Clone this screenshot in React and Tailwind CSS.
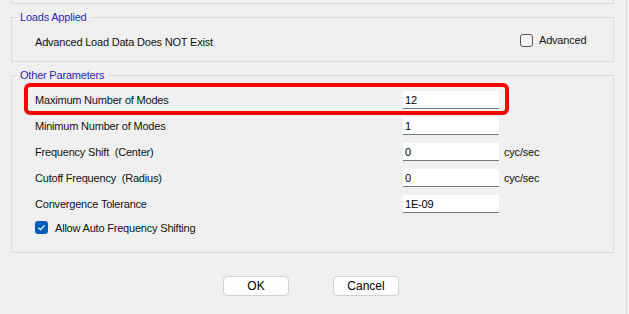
export default function App() {
  const rows = [
    { label: "Maximum Number of Modes", value: "12" },
    { label: "Minimum Number of Modes", value: "1" },
    { label: "Frequency Shift  (Center)", value: "0", unit: "cyc/sec" },
    { label: "Cutoff Frequency  (Radius)", value: "0", unit: "cyc/sec" },
    { label: "Convergence Tolerance", value: "1E-09" },
  ];

  return (
    <div className="w-[629px] h-[314px] bg-[#f0f0f0] flex overflow-hidden text-[11px] tracking-[-0.2px] text-[#111] font-['Liberation_Sans',Arial,sans-serif]">
      <div className="w-[626px] flex flex-col">
        {/* bottom of the group above */}
        <div className="h-[4px] ml-[11px] mr-[12px] border-x border-b border-[#dcdcdc]" />

        <fieldset className="mt-[5px] ml-[11px] mr-[12px] border border-[#dcdcdc] min-w-0">
          <legend className="ml-[5px] px-[3px] h-4 leading-4 text-[#2b2bb8]">Loads Applied</legend>
          <div className="pt-[9px] pb-[11px] pl-[23px] flex items-center h-[36px]">
            <span className="flex-1 leading-4">Advanced Load Data Does NOT Exist</span>
            <label className="w-[93px] flex items-center gap-[6px] -mt-[4px]">
              <span className="w-[13px] h-[13px] rounded-[3px] border border-[#555] bg-[#f7f7f7]" />
              <span className="leading-4">Advanced</span>
            </label>
          </div>
        </fieldset>

        <fieldset className="mt-[5px] ml-[11px] mr-[12px] border border-[#dcdcdc] min-w-0">
          <legend className="ml-[5px] px-[3px] h-4 leading-4 text-[#2b2bb8]">Other Parameters</legend>
          <div className="relative pt-[8px] pb-[18px] pl-[23px] flex flex-col gap-[8px]">
            {rows.map((r) => (
              <div key={r.label} className="flex items-center h-[18px]">
                <span className="w-[368px] whitespace-pre leading-4">{r.label}</span>
                <div className="w-[96px] h-[18px] bg-white border-b border-[#7a7a7a] pl-[2px] leading-[18px] text-black">
                  {r.value}
                </div>
                {r.unit && <span className="ml-[5px] leading-4">{r.unit}</span>}
              </div>
            ))}
            <label className="flex items-center gap-[7px] h-[13px]">
              <span className="w-[13px] h-[13px] rounded-[3px] bg-[#005fb8] flex items-center justify-center">
                <svg width="9" height="9" viewBox="0 0 9 9" fill="none">
                  <path d="M1.5 4.8 L3.5 6.7 L7.6 2.4" stroke="white" strokeWidth="1.2" />
                </svg>
              </span>
              <span className="leading-4">Allow Auto Frequency Shifting</span>
            </label>
            <div className="absolute top-0 left-[12px] w-[485px] h-[32px] border-4 border-[#ff0000] rounded-[6px]" />
          </div>
        </fieldset>

        <div className="mt-[23px] flex pl-[223px] gap-[44px]">
          <button className="w-[66px] h-[20px] bg-[#fdfdfd] border border-[#d0d0d0] rounded-[4px] leading-[18px] text-[12px] tracking-normal text-black">
            OK
          </button>
          <button className="w-[66px] h-[20px] bg-[#fdfdfd] border border-[#d0d0d0] rounded-[4px] leading-[18px] text-[12px] tracking-normal text-black">
            Cancel
          </button>
        </div>
      </div>
      <div className="w-px bg-[#dcdcdc]" />
      <div className="flex-1 bg-[#f3f3f3]" />
    </div>
  );
}
